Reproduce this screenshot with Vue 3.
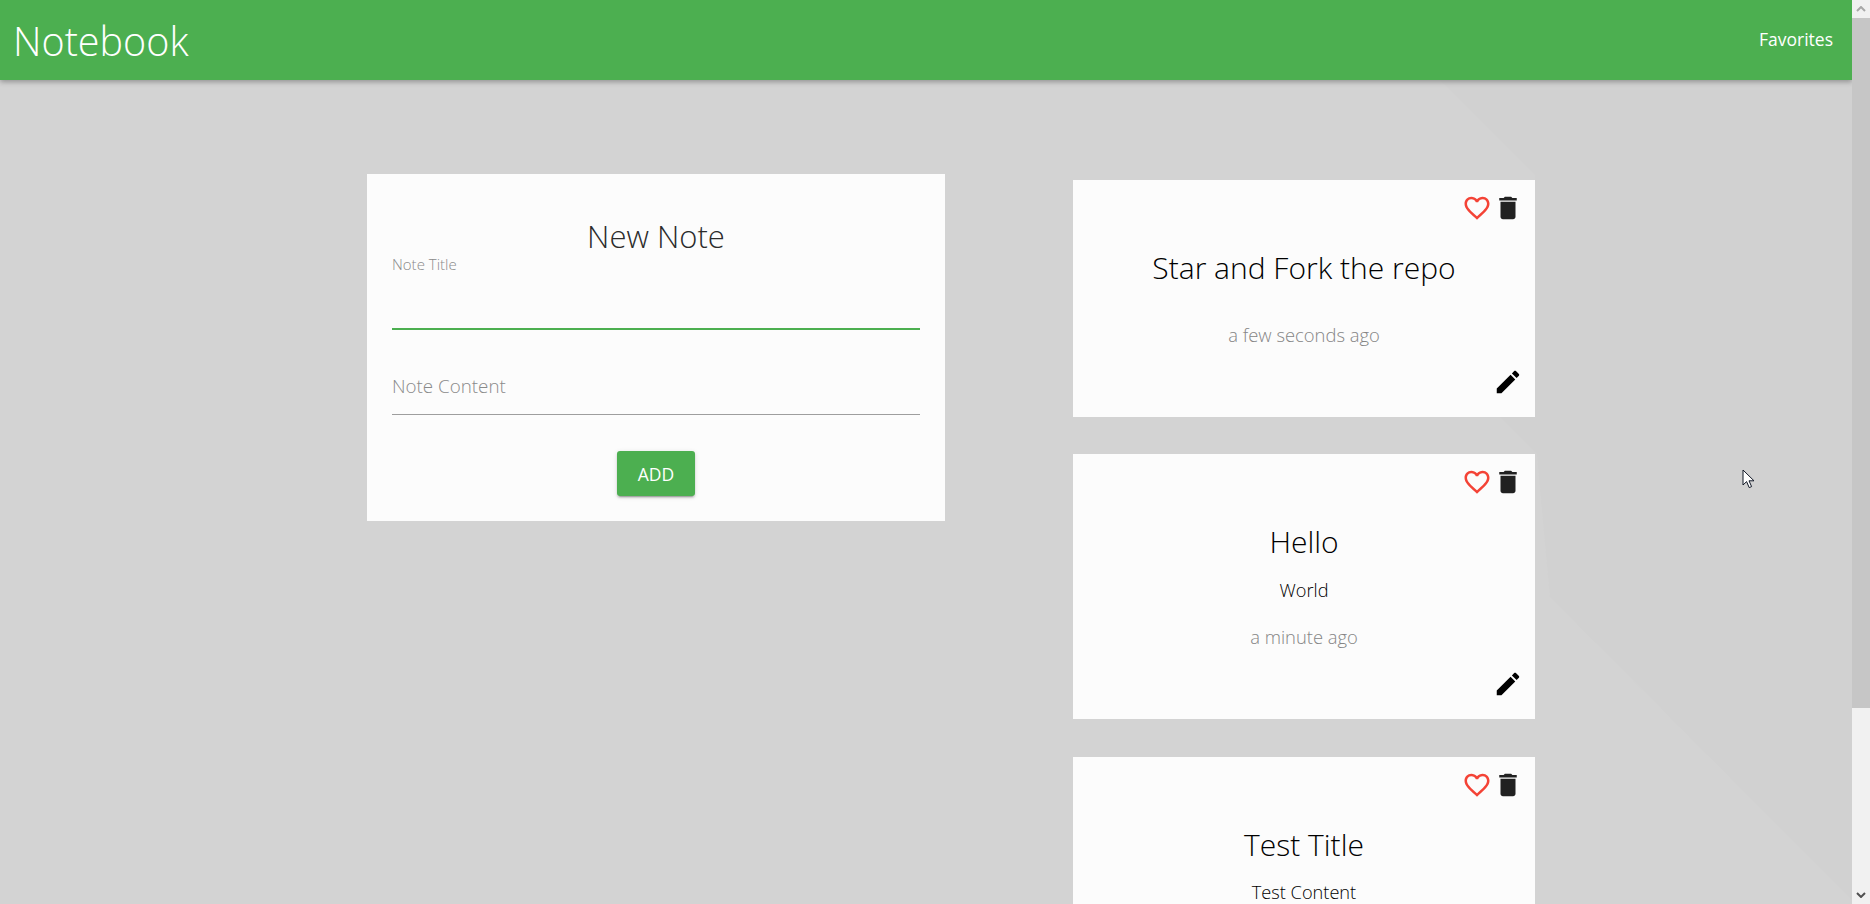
<script setup>
const notes = [
  { title: 'Star and Fork the repo', body: '', time: 'a few seconds ago' },
  { title: 'Hello', body: 'World', time: 'a minute ago' },
  { title: 'Test Title', body: 'Test Content', time: '' },
]
</script>

<template>
  <div class="page">
    <div class="main">
      <header class="bar">
        <span class="brand">Notebook</span>
        <span class="fav">Favorites</span>
      </header>
      <div class="content">
        <form class="form" @submit.prevent>
          <h2 class="form-title">New Note</h2>
          <label class="small-label">Note Title</label>
          <div class="line active"></div>
          <div class="placeholder">Note Content</div>
          <div class="line"></div>
          <button class="add" type="button">ADD</button>
        </form>
        <div class="notes">
          <article v-for="n in notes" :key="n.title" class="note">
            <div class="tools">
              <svg class="icon" viewBox="0 0 24 24"><path fill="#f44336" d="M16.5 3c-1.74 0-3.41.81-4.5 2.09C10.91 3.81 9.24 3 7.5 3 4.42 3 2 5.42 2 8.5c0 3.78 3.4 6.86 8.55 11.54L12 21.35l1.45-1.32C18.6 15.36 22 12.28 22 8.5 22 5.42 19.58 3 16.5 3zm-4.4 15.55l-.1.1-.1-.1C7.14 14.24 4 11.39 4 8.5 4 6.5 5.5 5 7.5 5c1.54 0 3.04.99 3.57 2.36h1.87C13.46 5.99 14.96 5 16.5 5c2 0 3.5 1.5 3.5 3.5 0 2.89-3.14 5.74-7.9 10.05z"/></svg>
              <svg class="icon" viewBox="0 0 24 24"><path fill="#212121" d="M6 19c0 1.1.9 2 2 2h8c1.1 0 2-.9 2-2V7H6v12zM19 4h-3.5l-1-1h-5l-1 1H5v2h14V4z"/></svg>
            </div>
            <h3 class="note-title">{{ n.title }}</h3>
            <p class="note-body">{{ n.body }}</p>
            <template v-if="n.time">
              <p class="note-time">{{ n.time }}</p>
              <div class="edit-row">
                <svg class="icon" viewBox="0 0 24 24"><path fill="#000" d="M3 17.25V21h3.75L17.81 9.94l-3.75-3.75L3 17.25zM20.71 7.04c.39-.39.39-1.02 0-1.41l-2.34-2.34c-.39-.39-1.02-.39-1.41 0l-1.83 1.83 3.75 3.75 1.83-1.83z"/></svg>
              </div>
            </template>
          </article>
        </div>
      </div>
      <svg class="cursor" width="14" height="20" viewBox="0 0 14 20"><path fill="#fff" stroke="#111827" stroke-width="1" d="M1 1v15l3.6-3.4 2.6 6 2.4-1-2.6-5.8H12z"/></svg>
    </div>
    <aside class="scroll">
      <div class="arrow"><svg width="10" height="6" viewBox="0 0 10 6"><path fill="none" stroke="#a8a8a8" stroke-width="2" d="M1 5l4-4 4 4"/></svg></div>
      <div class="thumb"></div>
      <div class="track"></div>
      <div class="arrow"><svg width="10" height="6" viewBox="0 0 10 6"><path fill="none" stroke="#505050" stroke-width="2" d="M1 1l4 4 4-4"/></svg></div>
    </aside>
  </div>
</template>

<style>
html, body { margin: 0; height: 100%; overflow: hidden; background: #d3d3d3; }
</style>

<style scoped>
.page {
  display: flex;
  width: 1870px;
  height: 904px;
  overflow: hidden;
  font-family: "Open Sans", "Noto Sans", sans-serif;
  background: #d3d3d3;
}
.main {
  position: relative;
  flex: 1;
  min-width: 0;
  overflow: hidden;
}
.main::before {
  content: "";
  position: absolute;
  inset: 0;
  background: #d1d1d1;
  clip-path: polygon(1440px 80px, 1535px 175px, 1535px 417px, 1500px 417px, 1537px 454px, 1550px 597px, 1852px 900px, 1852px 80px);
}
.bar {
  position: relative;
  z-index: 2;
  display: flex;
  align-items: center;
  justify-content: space-between;
  height: 80px;
  padding: 0 19px 0 13px;
  background: #4caf50;
  color: #fff;
  box-shadow: 0 2px 5px rgba(0, 0, 0, 0.3);
}
.brand { font-size: 39.5px; font-weight: 300; position: relative; top: 1px; }
.fav { font-size: 17.5px; font-weight: 400; position: relative; top: -1px; }
.content {
  position: relative;
  z-index: 1;
  display: flex;
  align-items: flex-start;
  gap: 128px;
  padding-left: 367px;
}
.form {
  display: flex;
  flex-direction: column;
  width: 578px;
  height: 347px;
  margin-top: 94px;
  padding: 0 25px;
  box-sizing: border-box;
  background: #fcfcfc;
}
.form-title {
  margin: 42px 0 0;
  font-size: 31px;
  line-height: 40px;
  font-weight: 300;
  text-align: center;
  color: #2b2b2b;
}
.small-label {
  font-size: 15px;
  line-height: 18px;
  font-weight: 300;
  color: #8a8a8a;
  margin-top: -1px;
}
.line {
  height: 1px;
  background: #9e9e9e;
}
.line.active {
  height: 2px;
  margin-top: 55px;
  background: #4caf50;
}
.placeholder {
  margin-top: 41px;
  font-size: 18.8px;
  line-height: 30px;
  font-weight: 300;
  color: #8a8a8a;
}
.line:not(.active) { margin-top: 13px; }
.add {
  align-self: center;
  width: 78px;
  height: 45px;
  margin-top: 36px;
  padding: 0;
  border: 0;
  border-radius: 3px;
  background: #4caf50;
  color: #fff;
  font-family: inherit;
  font-size: 17.5px;
  font-weight: 400;
  box-shadow: 0 2px 2px rgba(0, 0, 0, 0.14), 0 3px 1px -2px rgba(0, 0, 0, 0.2), 0 1px 5px rgba(0, 0, 0, 0.12);
}
.notes {
  display: flex;
  flex-direction: column;
  gap: 37.5px;
  width: 462px;
  margin-top: 100px;
}
.note {
  display: flex;
  flex-direction: column;
  align-items: center;
  padding: 13px 12px 20px;
  background: #fcfcfc;
  flex: none;
}
.tools, .edit-row {
  display: flex;
  justify-content: flex-end;
  align-self: stretch;
  height: 30px;
}
.icon { width: 30px; height: 30px; display: block; flex: none; }
.tools .icon + .icon { margin-left: 1px; }
.edit-row { margin-top: 19px; }
.note-title {
  margin: 25px 0 13.5px;
  font-size: 30px;
  line-height: 40px;
  font-weight: 300;
  color: #000;
}
.note-body {
  margin: 0 0 19px;
  font-size: 18.2px;
  line-height: 28.5px;
  font-weight: 300;
  color: #000;
}
.note-time {
  margin: 0;
  font-size: 18.4px;
  line-height: 27px;
  font-weight: 300;
  color: #858585;
}
.cursor {
  position: absolute;
  left: 1742px;
  top: 469px;
  z-index: 3;
}
.scroll {
  display: flex;
  flex-direction: column;
  width: 18px;
  flex: none;
  background: #f1f1f1;
}
.arrow {
  display: flex;
  align-items: center;
  justify-content: center;
  height: 18px;
  flex: none;
}
.thumb { height: 690px; background: #c6c6c6; flex: none; }
.track { flex: 1; }
</style>
